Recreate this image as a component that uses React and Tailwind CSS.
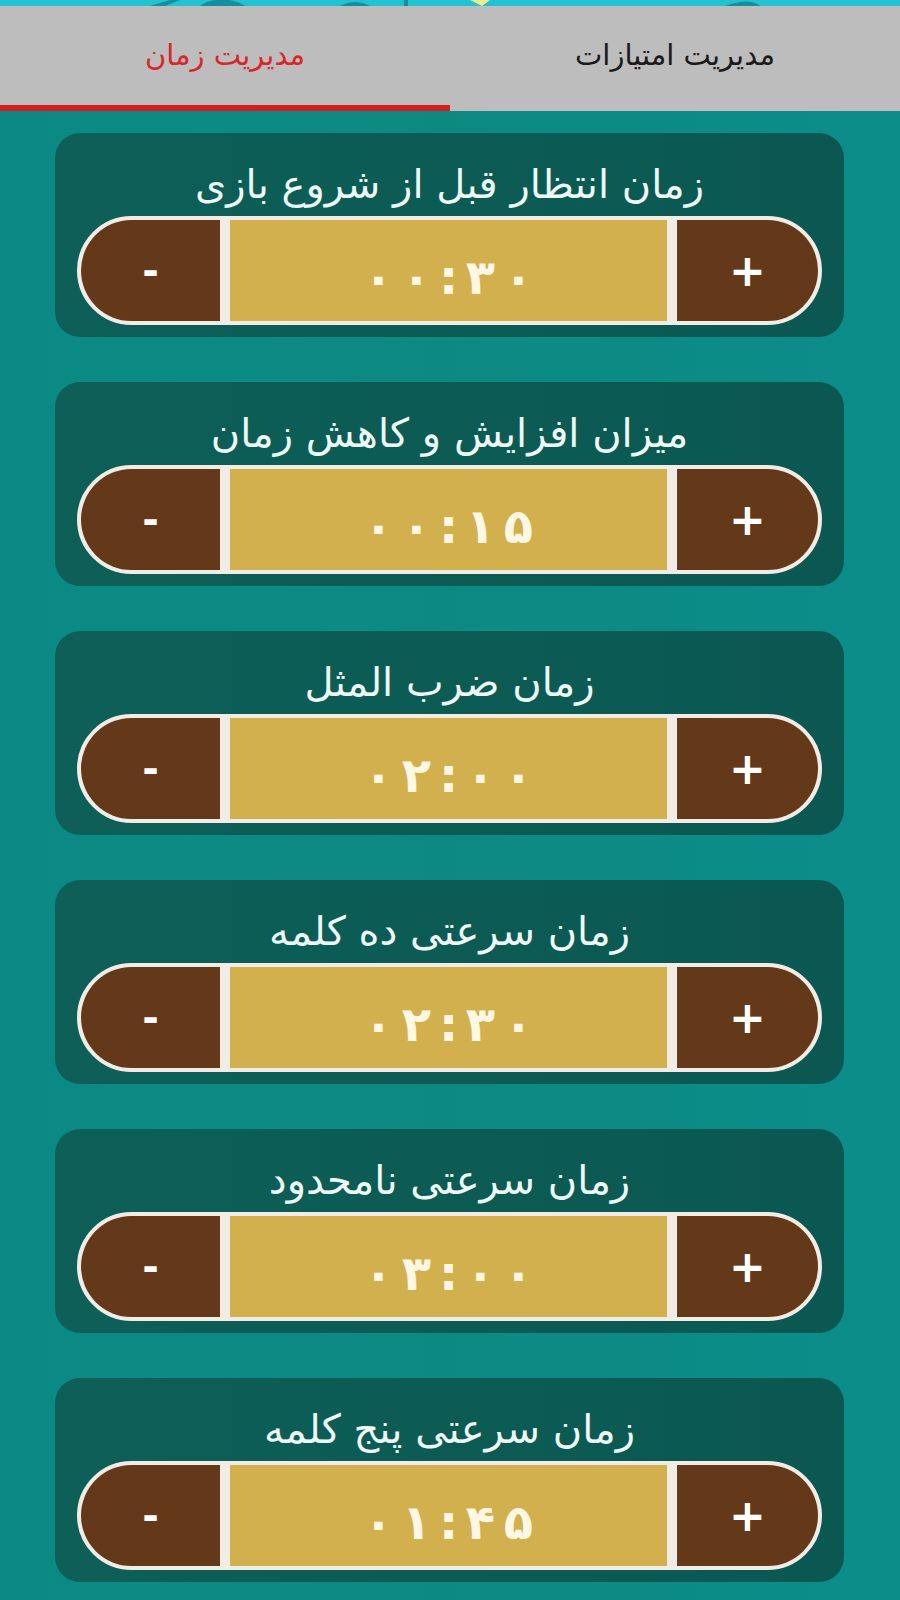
const ROWS = [
  { title: 'زمان انتظار قبل از شروع بازی', value: '۰۰:۳۰' },
  { title: 'میزان افزایش و کاهش زمان', value: '۰۰:۱۵' },
  { title: 'زمان ضرب المثل', value: '۰۲:۰۰' },
  { title: 'زمان سرعتی ده کلمه', value: '۰۲:۳۰' },
  { title: 'زمان سرعتی نامحدود', value: '۰۳:۰۰' },
  { title: 'زمان سرعتی پنج کلمه', value: '۰۱:۴۵' },
];

function TopStrip() {
  return (
    <div className="h-[6px] bg-[#22c2d2] overflow-hidden">
      <svg width="900" height="6" viewBox="0 0 900 6">
        <path d="M150 6 L170 0 L180 0 L165 6 Z" fill="#138fa0" />
        <path d="M200 6 Q210 -2 230 0 Q240 2 245 6 Z" fill="#138fa0" />
        <path d="M210 6 L215 0 L220 0 L218 6 Z" fill="#138fa0" />
        <path d="M340 6 Q355 -2 370 6 Z" fill="#138fa0" />
        <rect x="404" y="0" width="4" height="6" fill="#138fa0" />
        <path d="M470 0 L490 0 L482 6 Z" fill="#e8ef8a" />
        <path d="M725 6 Q750 -3 760 6 Z" fill="#138fa0" />
      </svg>
    </div>
  );
}

function Header() {
  return (
    <div dir="rtl" className="flex h-[105px] bg-[#bdbdbd]">
      <div className="flex-1 flex items-center justify-center pb-[6px]">
        <span className="text-[29px] text-[#1a1a1a]">مدیریت امتیازات</span>
      </div>
      <div className="flex-1 flex flex-col">
        <div className="flex-1 flex items-center justify-center">
          <span className="text-[29px] text-[#d8262a]">مدیریت زمان</span>
        </div>
        <div className="h-[6px] bg-[#cf1f22]" />
      </div>
    </div>
  );
}

// each character in its own cell so the digits spread like the original
function TimeValue({ value }) {
  return (
    <div dir="ltr" className="flex items-center text-[48px] font-bold text-[#fdf7e4] leading-none">
      {value.split('').map((ch, i) =>
        ch === ':' ? (
          <span key={i} className="w-[26px] text-center">{ch}</span>
        ) : (
          <span key={i} className="w-[38px] text-center">{ch}</span>
        )
      )}
    </div>
  );
}

function TimeCard({ title, value }) {
  return (
    <div className="rounded-[25px] bg-gradient-to-r from-[#0d5f57] to-[#0a5851] px-[22px] pb-[12px]">
      <div dir="rtl" className="h-[83px] flex items-center justify-center pt-[18px] text-[40px] text-[#eef8f4] leading-none">
        {title}
      </div>
      <div className="h-[109px] rounded-full border-[4px] border-[#f1ece6] bg-[#f1ece6] overflow-hidden flex gap-[10px]">
        <div className="w-[139px] bg-[#63391a] flex items-center justify-center">
          <span className="text-[40px] font-bold text-white leading-none">-</span>
        </div>
        <div className="flex-1 bg-[#d2b04e] flex items-center justify-center pt-[12px]">
          <TimeValue value={value} />
        </div>
        <div className="w-[141px] bg-[#63391a] flex items-center justify-center">
          <span className="text-[44px] font-bold text-white leading-none">+</span>
        </div>
      </div>
    </div>
  );
}

export default function App() {
  return (
    <div className="min-h-[1600px] w-[900px] bg-gradient-to-r from-[#0b8a85] via-[#0c8a82] to-[#0c8d8a] font-['DejaVu_Sans',sans-serif]">
      <TopStrip />
      <Header />
      <div className="flex flex-col gap-[45px] pt-[22px] pl-[55px] pr-[56px]">
        {ROWS.map((row) => (
          <TimeCard key={row.title} title={row.title} value={row.value} />
        ))}
      </div>
    </div>
  );
}
